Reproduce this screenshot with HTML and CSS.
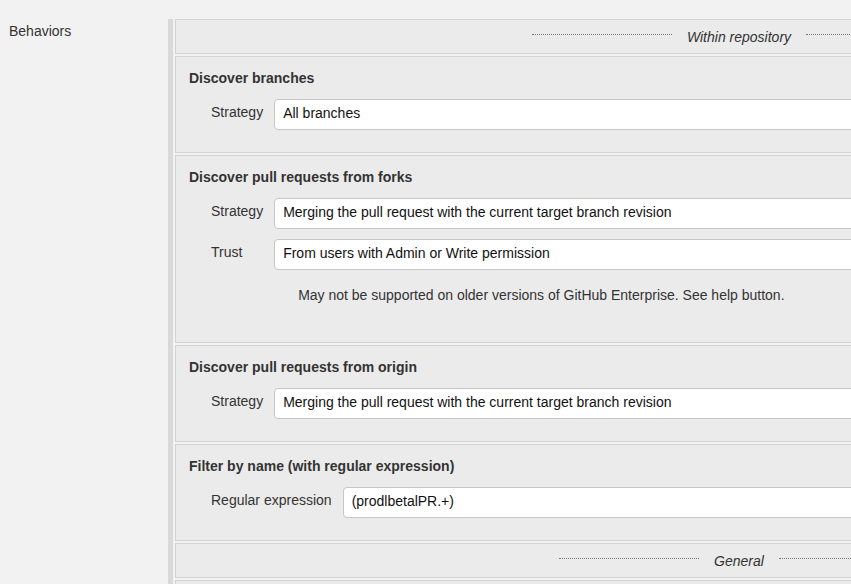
FILE: index.html
```html
<!DOCTYPE html>
<html lang="en">
<head>
<meta charset="utf-8">
<title>Behaviors</title>
<link rel="stylesheet" href="styles.css">
</head>
<body>
<div class="page">
  <div class="row-label">Behaviors</div>
  <div class="rail">
    <div class="section section-header">
      <span class="dots"></span><span class="header-text">Within repository</span><span class="dots"></span>
    </div>

    <div class="section">
      <div class="title">Discover branches</div>
      <div class="fields">
        <div class="flabel">Strategy</div>
        <div class="select">All branches</div>
      </div>
    </div>

    <div class="section">
      <div class="title">Discover pull requests from forks</div>
      <div class="fields">
        <div class="flabel">Strategy</div>
        <div class="select">Merging the pull request with the current target branch revision</div>
        <div class="flabel">Trust</div>
        <div class="select">From users with Admin or Write permission</div>
        <div class="help">May not be supported on older versions of GitHub Enterprise. See help button.</div>
      </div>
    </div>

    <div class="section">
      <div class="title">Discover pull requests from origin</div>
      <div class="fields">
        <div class="flabel">Strategy</div>
        <div class="select">Merging the pull request with the current target branch revision</div>
      </div>
    </div>

    <div class="section">
      <div class="title">Filter by name (with regular expression)</div>
      <div class="fields">
        <div class="flabel">Regular expression</div>
        <div class="select">(prodlbetalPR.+)</div>
      </div>
    </div>

    <div class="section section-header">
      <span class="dots"></span><span class="header-text">General</span><span class="dots"></span>
    </div>

    <div class="section section-empty"></div>
  </div>
</div>
</body>
</html>
```

FILE: styles.css
```css
html, body {
  margin: 0;
  padding: 0;
  overflow: hidden;
  background: #f2f2f2;
}

body {
  font-family: "Liberation Sans", Arial, Helvetica, sans-serif;
  font-size: 14px;
  line-height: 16px;
  color: #333;
}

.page {
  display: flex;
  align-items: flex-start;
  width: 1400px;
}

.row-label {
  width: 159px;
  padding: 23px 0 0 9px;
  flex: none;
}

.rail {
  margin-top: 19px;
  border-left: 5px solid #d9d9d9;
  padding-left: 2px;
  width: 1128px;
  min-height: 600px;
  display: flex;
  flex-direction: column;
  gap: 2px;
}

.section {
  border: 1px solid #d3d3d3;
  background: #ebebeb;
  padding: 13px 12px 22px 13px;
}

.section-header {
  height: 33px;
  padding: 0;
  display: flex;
  align-items: center;
  justify-content: center;
  gap: 15px;
}

.header-text {
  font-style: italic;
  color: #333;
}

.dots {
  width: 140px;
  border-top: 1px dotted #777;
  margin-bottom: 5px;
}

.title {
  font-weight: bold;
  color: #333;
}

.fields {
  margin: 13px 0 0 22px;
  display: grid;
  grid-template-columns: auto 1fr;
  column-gap: 11px;
  row-gap: 10px;
}

.flabel {
  line-height: 27px;
  color: #333;
  white-space: nowrap;
}

.select {
  height: 31px;
  box-sizing: border-box;
  border: 1px solid #c6c6c6;
  border-radius: 4px;
  background: #fff;
  padding: 0 8px 2px 8px;
  line-height: 27px;
  color: #111;
  white-space: nowrap;
}

.help {
  grid-column: 2;
  padding: 7px 0 17px 24px;
  color: #333;
}

.section-empty {
  min-height: 60px;
}
```
